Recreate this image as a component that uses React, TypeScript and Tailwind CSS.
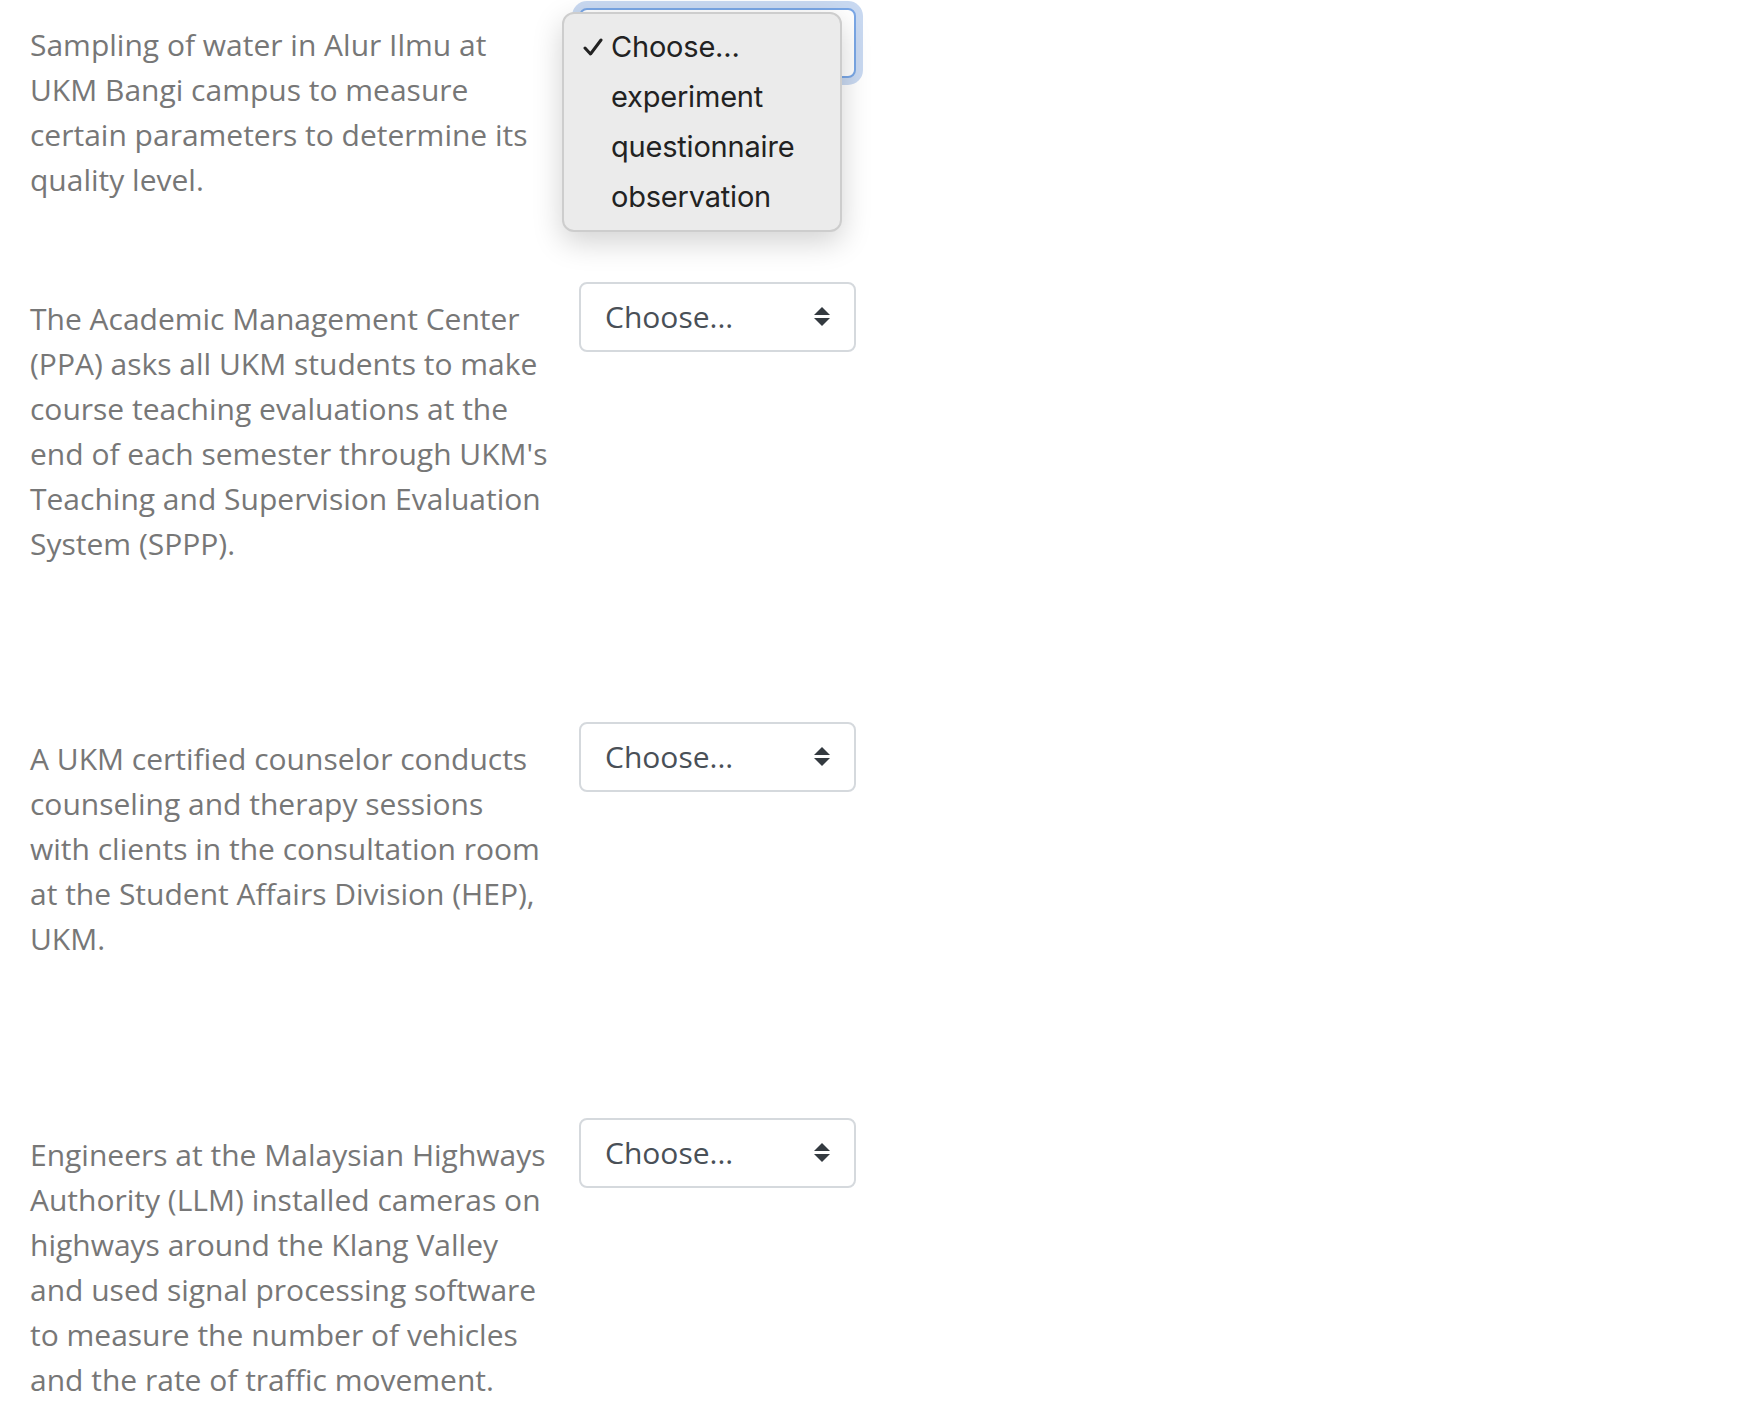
type Question = {
  id: number;
  text: string;
  gap: string;
};

const questions: Question[] = [
  {
    id: 1,
    text: 'Sampling of water in Alur Ilmu at UKM Bangi campus to measure certain parameters to determine its quality level.',
    gap: 'mt-[8px]',
  },
  {
    id: 2,
    text: "The Academic Management Center (PPA) asks all UKM students to make course teaching evaluations at the end of each semester through UKM's Teaching and Supervision Evaluation System (SPPP).",
    gap: 'mt-[80px]',
  },
  {
    id: 3,
    text: 'A UKM certified counselor conducts counseling and therapy sessions with clients in the consultation room at the Student Affairs Division (HEP), UKM.',
    gap: 'mt-[156px]',
  },
  {
    id: 4,
    text: 'Engineers at the Malaysian Highways Authority (LLM) installed cameras on highways around the Klang Valley and used signal processing software to measure the number of vehicles and the rate of traffic movement.',
    gap: 'mt-[157px]',
  },
];

const options = ['Choose...', 'experiment', 'questionnaire', 'observation'];

function SortArrows() {
  return (
    <svg width="16" height="20" viewBox="0 0 16 20" className="text-[#343a40]">
      <path d="M8 0 L16 8 L0 8 Z" fill="currentColor" />
      <path d="M0 11 L16 11 L8 19 Z" fill="currentColor" />
    </svg>
  );
}

function SelectBox({ focused }: { focused?: boolean }) {
  return (
    <div
      className={
        focused
          ? 'flex h-[70px] w-[277px] shrink-0 items-center justify-between rounded-[8px] border-2 border-[#7aa7e6] bg-white pl-[24px] pr-[24px] shadow-[0_0_0_7px_rgba(120,160,220,0.4)]'
          : 'flex h-[70px] w-[277px] shrink-0 items-center justify-between rounded-[8px] border-2 border-[#d5d9dd] bg-white pl-[24px] pr-[24px]'
      }
    >
      <span className="text-[30px] leading-none text-[#495057]">Choose...</span>
      <SortArrows />
    </div>
  );
}

/** Native macOS style popup opened over the first select. */
function OpenMenu() {
  return (
    <div className="absolute left-[-17px] top-[4px] z-10 w-[280px] rounded-[12px] border-2 border-[#cdcdcd] bg-[#ebebeb] pb-[8px] pt-[8px] shadow-[0_10px_30px_rgba(0,0,0,0.18)] font-['Inter',sans-serif]">
      {options.map((o, i) => (
        <div key={o} className="flex h-[50px] items-center text-[29px] leading-[50px] tracking-[-0.2px] text-[#222]">
          <span className="flex w-[47px] justify-end pr-[8px]">
            {i === 0 && (
              <svg width="20" height="18" viewBox="0 0 20 18">
                <path d="M2 10 L7.5 16 L18 2" fill="none" stroke="#222" strokeWidth="3" strokeLinecap="round" strokeLinejoin="round" />
              </svg>
            )}
          </span>
          <span>{o}</span>
        </div>
      ))}
    </div>
  );
}

export default function App() {
  return (
    <div className="min-h-[1416px] bg-white pl-[30px] font-['Open_Sans',sans-serif]">
      <div className="flex flex-col">
        {questions.map((q) => (
          <div key={q.id} className={`flex items-start ${q.gap}`}>
            <p className="w-[519px] shrink-0 pt-[14px] text-[30px] leading-[45px] text-[#777]">{q.text}</p>
            <div className="relative ml-[30px]">
              <SelectBox focused={q.id === 1} />
              {q.id === 1 && <OpenMenu />}
            </div>
          </div>
        ))}
      </div>
    </div>
  );
}
